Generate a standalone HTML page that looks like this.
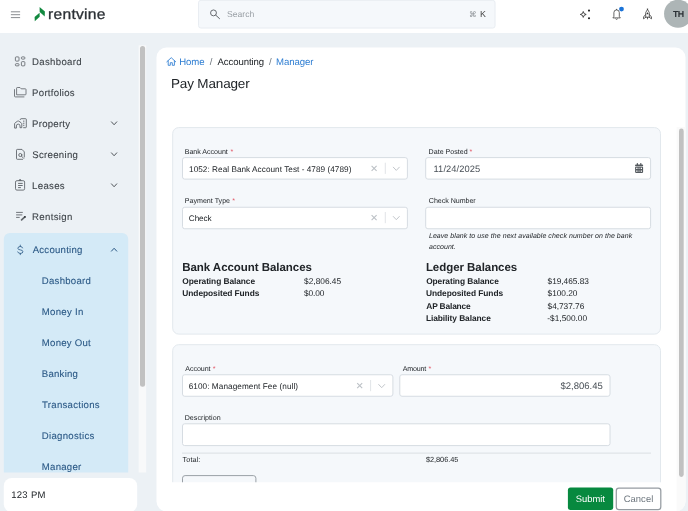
<!DOCTYPE html>
<html lang="en"><head><meta charset="utf-8"><title>Pay Manager - Rentvine</title>
<style>
html,body{margin:0;padding:0}
body{width:688px;height:511px;overflow:hidden;background:#ecf1f5;position:relative;
font-family:"Liberation Sans",Arial,sans-serif;-webkit-font-smoothing:antialiased}
.a{position:absolute;box-sizing:border-box}
.t{position:absolute;white-space:nowrap;line-height:1;margin:0;padding:0;text-rendering:geometricPrecision}
svg{position:absolute;left:0;top:0;overflow:visible}
</style></head><body>

<svg width="688" height="511" viewBox="0 0 688 511">
<defs><clipPath id="scrollclip"><rect x="156" y="47" width="520.6" height="435.3"/></clipPath></defs>
<rect x="0.00" y="-2.00" width="688.00" height="35.00" rx="0" fill="#fff"/>
<rect x="198.50" y="0.30" width="296.60" height="27.80" rx="2.5" fill="#f5f8fb" stroke="#e6ebf0" stroke-width="0.9"/>
<circle cx="678.1" cy="13.8" r="14.05" fill="#adb5b6"/>
<rect x="156.50" y="47.60" width="529.00" height="463.80" rx="10" fill="#fff"/>
<path d="M676.6 127 H685.5 V501.4 A10 10 0 0 1 676.6 511.35 Z" fill="#fafafa"/>
<rect x="679.00" y="128.60" width="4.70" height="348.30" rx="2.35" fill="#c1c1c1"/>
<path d="M3.8 472.5 V239 A6 6 0 0 1 9.8 233 H122.2 A6 6 0 0 1 128.2 239 V472.5 Z" fill="#d4eaf7"/>
<rect x="138.60" y="45.40" width="7.60" height="427.10" rx="0" fill="#f8f9fa"/>
<rect x="140.00" y="46.00" width="5.10" height="340.80" rx="2.5" fill="#c1c1c1"/>
<rect x="3.80" y="478.00" width="133.40" height="34.20" rx="8" fill="#fff"/>
<rect x="172.70" y="127.60" width="487.80" height="206.50" rx="6" fill="#f5f8fb" stroke="#e2e8ed" stroke-width="1.0"/>
<g clip-path="url(#scrollclip)">
<rect x="172.70" y="344.70" width="487.80" height="175.30" rx="6" fill="#f5f8fb" stroke="#e2e8ed" stroke-width="1.0"/>
<rect x="182.50" y="374.75" width="210.40" height="21.50" rx="2.2" fill="#fff" stroke="#d6dce2" stroke-width="1.0"/>
<rect x="399.80" y="374.75" width="210.20" height="21.50" rx="2.2" fill="#fff" stroke="#d6dce2" stroke-width="1.0"/>
<rect x="182.50" y="423.80" width="427.50" height="21.80" rx="2.2" fill="#fff" stroke="#d6dce2" stroke-width="1.0"/>
<path d="M182 453.1 H651" stroke="#dadfe3" stroke-width="1"/>
<rect x="182.50" y="475.60" width="73.40" height="22.40" rx="2.6" fill="none" stroke="#9aa0a6" stroke-width="1.0"/>
</g>
<rect x="182.50" y="157.60" width="224.90" height="21.50" rx="2.2" fill="#fff" stroke="#d6dce2" stroke-width="1.0"/>
<rect x="425.70" y="157.60" width="224.90" height="21.50" rx="2.2" fill="#fff" stroke="#d6dce2" stroke-width="1.0"/>
<rect x="182.50" y="207.25" width="224.90" height="21.50" rx="2.2" fill="#fff" stroke="#d6dce2" stroke-width="1.0"/>
<rect x="425.70" y="207.25" width="224.90" height="21.50" rx="2.2" fill="#fff" stroke="#d6dce2" stroke-width="1.0"/>
<rect x="567.90" y="487.60" width="45.30" height="22.50" rx="2.6" fill="#07893f"/>
<rect x="616.30" y="488.10" width="44.50" height="21.50" rx="2.6" fill="#fff" stroke="#969ca2" stroke-width="1.25"/>
</svg>
<svg width="688" height="511" viewBox="0 0 688 511">
<path d="M10.9 11.8H20.1M10.9 14.7H20.1M10.9 17.6H20.1" stroke="#6a6f74" stroke-width="0.8" fill="none"/>
<path d="M39.6 6.9 L44.9 11.5 L44.7 16.4 L39.7 12.1 Z" fill="#12893f"/>
<path d="M39.6 12.7 L39.7 16.7 L34.8 21.2 L34.6 17.1 Z" fill="#12893f"/>
<circle cx="213.5" cy="12.9" r="2.95" fill="none" stroke="#5f6368" stroke-width="0.95"/><path d="M215.7 15.1 L219.5 18.6" stroke="#5f6368" stroke-width="1.0" stroke-linecap="round"/>
<path d="M583.25 11.5 Q583.5 14.2 586.2 14.45 Q583.5 14.7 583.25 17.4 Q583 14.7 580.3 14.45 Q583 14.2 583.25 11.5Z" fill="none" stroke="#222" stroke-width="0.8" stroke-linejoin="round"/>
<circle cx="589" cy="10.6" r="1.05" fill="#222"/><circle cx="589" cy="18.2" r="1.05" fill="#222"/>
<path d="M612.9 17.9 H620.3 L619.3 16.4 V12.6 A2.7 2.7 0 0 0 613.9 12.6 V16.4 Z" fill="none" stroke="#333" stroke-width="0.75" stroke-linejoin="round"/><path d="M615.5 18.7 Q616.6 20.2 617.7 18.7" fill="none" stroke="#333" stroke-width="0.75"/><path d="M616.6 8.9 V10" stroke="#333" stroke-width="0.75"/>
<circle cx="621.5" cy="9.1" r="2.4" fill="#1a73d8"/>
<g fill="none" stroke="#333" stroke-width="0.75" stroke-linejoin="round" stroke-linecap="round"><path d="M647.5 9.1 Q650.3 12.2 649.3 17.2 H645.7 Q644.7 12.2 647.5 9.1Z"/><path d="M645.5 14.6 L643.5 17 V18.8 L645.8 17.3"/><path d="M649.5 14.6 L651.5 17 V18.8 L649.2 17.3"/><path d="M647.5 17.4 V18.9"/></g><circle cx="647.5" cy="13.4" r="0.85" fill="#333"/>
<g fill="none" stroke="#5a5f64" stroke-width="0.8"><rect x="15.4" y="56.9" width="3.6" height="4.2" rx="0.8"/><rect x="21.4" y="56.9" width="3.45" height="2.2" rx="0.8"/><rect x="15.4" y="63.7" width="3.6" height="2.15" rx="0.8"/><rect x="21.4" y="61.65" width="3.45" height="4.2" rx="0.8"/></g>
<g fill="none" stroke="#5a5f64" stroke-width="0.8" stroke-linejoin="round"><path d="M16.6 94.8 V88.2 Q16.6 87.5 17.3 87.5 H20 L21.2 88.8 H25.3 Q26 88.8 26 89.5 V94.1 Q26 94.8 25.3 94.8 Z"/><path d="M14.5 89.2 V96.1 Q14.5 96.9 15.3 96.9 H24.4"/></g>
<g fill="none" stroke="#5a5f64" stroke-width="0.85" stroke-linejoin="round" stroke-linecap="round"><path d="M20.2 119.5 Q20.3 118.7 21.1 118.7 H25.6 Q26.3 118.7 26.3 119.4 V127 Q26.3 127.7 25.6 127.7 H23.6"/><path d="M14.6 127.7 V123.9 Q14.6 123.2 15.2 122.8 L17.5 121.2 Q18.2 120.7 18.9 121.2 L21.2 122.8 Q21.8 123.2 21.8 123.9 V127.7 H20 V125.9 A1.8 1.8 0 0 0 16.4 125.9 V127.7 Z"/><path d="M23.8 120.9 V121.5 M23.8 123 V123.6 M23.8 125.1 V125.7" stroke-width="0.9"/></g>
<g fill="none" stroke="#5a5f64" stroke-width="0.85" stroke-linejoin="round" stroke-linecap="round"><path d="M22.6 159.3 H17.3 Q16.5 159.3 16.5 158.5 V150.2 Q16.5 149.4 17.3 149.4 H22 L24.3 151.9 V157"/><circle cx="20.3" cy="155" r="1.55"/><path d="M21.5 156.2 L23.7 158.4"/></g>
<g fill="none" stroke="#5a5f64" stroke-width="0.85" stroke-linejoin="round"><rect x="15.5" y="180.7" width="9.1" height="9.4" rx="1.4"/><path d="M18.8 180.7 L20.05 179.3 L21.3 180.7" fill="#5a5f64"/><path d="M18.1 183.4 H22.7 M18.1 185.5 H22.7 M18.1 187.6 H20.9" stroke-width="0.9"/></g>
<g fill="none" stroke="#5a5f64" stroke-width="0.85"><path d="M16.1 212.4 H22.8 M16.1 214.9 H22.3 M16.1 217.4 H19.7"/></g><path d="M21.6 219.9 L24.9 216.9" stroke="#62676c" stroke-width="1.7" stroke-linecap="round"/><circle cx="24.9" cy="216.9" r="0.85" fill="#2f3337"/>
<g fill="none" stroke="#2a5885" stroke-width="0.8" stroke-linecap="round"><path d="M22.6 247.9 Q22.3 246.5 20.3 246.5 Q17.9 246.5 17.9 248.3 Q17.9 249.7 20.3 249.9 Q22.9 250.1 22.9 251.8 Q22.9 253.4 20.3 253.4 Q18.1 253.4 17.7 251.9"/><path d="M20.3 245.1 V246.5 M20.3 253.4 V254.7"/></g>
<path d="M111.44999999999999 121.85 L114.1 124.75 L116.75 121.85" fill="none" stroke="#50555a" stroke-width="1.0" stroke-linecap="round" stroke-linejoin="round"/>
<path d="M111.44999999999999 152.85000000000002 L114.1 155.75 L116.75 152.85000000000002" fill="none" stroke="#50555a" stroke-width="1.0" stroke-linecap="round" stroke-linejoin="round"/>
<path d="M111.44999999999999 183.85000000000002 L114.1 186.75 L116.75 183.85000000000002" fill="none" stroke="#50555a" stroke-width="1.0" stroke-linecap="round" stroke-linejoin="round"/>
<path d="M111.44999999999999 251.14999999999998 L114.1 248.25 L116.75 251.14999999999998" fill="none" stroke="#2a5885" stroke-width="1.0" stroke-linecap="round" stroke-linejoin="round"/>
<g fill="none" stroke="#2d7dd2" stroke-width="0.85" stroke-linejoin="round" stroke-linecap="round"><path d="M166.8 61.8 L171.25 57.7 L175.7 61.8"/><path d="M168.2 60.9 V65.3 H170.3 V62.7 H172.3 V65.3 H174.4 V60.9"/></g>
<path d="M371.6 165.8 L376.6 170.8 M376.6 165.8 L371.6 170.8" fill="none" stroke="#bcc1c6" stroke-width="1.1" stroke-linecap="butt"/>
<path d="M385.3 162.70000000000002 V173.9" stroke="#d9dde1" stroke-width="0.8"/>
<path d="M393.3 167.20000000000002 L396.3 170.4 L399.3 167.20000000000002" fill="none" stroke="#c2c6cb" stroke-width="1.0" stroke-linecap="round" stroke-linejoin="round"/>
<path d="M371.6 215.1 L376.6 220.1 M376.6 215.1 L371.6 220.1" fill="none" stroke="#bcc1c6" stroke-width="1.1" stroke-linecap="butt"/>
<path d="M385.3 212.0 V223.2" stroke="#d9dde1" stroke-width="0.8"/>
<path d="M393.3 216.5 L396.3 219.7 L399.3 216.5" fill="none" stroke="#c2c6cb" stroke-width="1.0" stroke-linecap="round" stroke-linejoin="round"/>
<path d="M357.2 383.1 L362.2 388.1 M362.2 383.1 L357.2 388.1" fill="none" stroke="#bcc1c6" stroke-width="1.1" stroke-linecap="butt"/>
<path d="M370.6 380.0 V391.20000000000005" stroke="#d9dde1" stroke-width="0.8"/>
<path d="M378.7 384.5 L381.7 387.70000000000005 L384.7 384.5" fill="none" stroke="#c2c6cb" stroke-width="1.0" stroke-linecap="round" stroke-linejoin="round"/>
<g fill="#555a5f"><rect x="635.1" y="166.6" width="8" height="6.3" rx="0.8"/><path d="M635.1 165.9 V165.3 Q635.1 164.5 635.9 164.5 H642.3 Q643.1 164.5 643.1 165.3 V165.9 Z"/><rect x="636.8" y="163" width="1.2" height="2.2" rx="0.5"/><rect x="640.2" y="163" width="1.2" height="2.2" rx="0.5"/><g fill="#fff"><rect x="636.2" y="167.7" width="1.3" height="1.3"/><rect x="640.7" y="167.7" width="1.3" height="1.3"/><rect x="636.2" y="170.5" width="1.3" height="1.3"/><rect x="640.7" y="170.5" width="1.3" height="1.3"/></g><g fill="#9ea2a6"><rect x="638.2" y="167.7" width="1.8" height="1.3"/><rect x="638.2" y="170.5" width="1.8" height="1.3"/></g></g>
</svg>
<div class="a" style="left:0;top:0;width:688px;height:511px;will-change:transform">
<div class="t" id="t0" style="left:48.17px;top:8.00px;font-size:14.6px;letter-spacing:0.258px;color:#2b3035;-webkit-text-stroke:0.3px #2b3035;transform:scaleX(1.07);transform-origin:0 0">rentvine</div>
<div class="t" id="t1" style="left:227.10px;top:10.00px;font-size:8.6px;letter-spacing:-0.013px;color:#9aa0a6">Search</div>
<div class="t" id="t2" style="left:469.10px;top:11.00px;font-size:7.6px;letter-spacing:0.000px;color:#8a8f94;font-family:'DejaVu Sans',sans-serif">⌘</div>
<div class="t" id="t3" style="left:479.90px;top:10.00px;font-size:8.9px;letter-spacing:0.000px;color:#444">K</div>
<div class="t" id="t4" style="left:672.95px;top:10.00px;font-size:8.9px;letter-spacing:-0.486px;color:#2b3035;font-weight:700">TH</div>
<div class="t" id="t5" style="left:32.10px;top:58.00px;font-size:9.6px;letter-spacing:0.322px;color:#3d4348;-webkit-text-stroke:0.1px #3d4348">Dashboard</div>
<div class="t" id="t6" style="left:32.10px;top:89.00px;font-size:9.6px;letter-spacing:0.281px;color:#3d4348;-webkit-text-stroke:0.1px #3d4348">Portfolios</div>
<div class="t" id="t7" style="left:32.10px;top:120.00px;font-size:9.6px;letter-spacing:0.238px;color:#3d4348;-webkit-text-stroke:0.1px #3d4348">Property</div>
<div class="t" id="t8" style="left:32.25px;top:151.00px;font-size:9.6px;letter-spacing:0.308px;color:#3d4348;-webkit-text-stroke:0.1px #3d4348">Screening</div>
<div class="t" id="t9" style="left:32.10px;top:182.00px;font-size:9.6px;letter-spacing:0.319px;color:#3d4348;-webkit-text-stroke:0.1px #3d4348">Leases</div>
<div class="t" id="t10" style="left:32.10px;top:213.00px;font-size:9.6px;letter-spacing:0.336px;color:#3d4348;-webkit-text-stroke:0.1px #3d4348">Rentsign</div>
<div class="t" id="t11" style="left:32.65px;top:246.00px;font-size:9.6px;letter-spacing:0.255px;color:#2a5885;-webkit-text-stroke:0.1px #2a5885">Accounting</div>
<div class="t" id="t12" style="left:41.80px;top:277.00px;font-size:9.6px;letter-spacing:0.259px;color:#2a5885;-webkit-text-stroke:0.1px #2a5885">Dashboard</div>
<div class="t" id="t13" style="left:41.80px;top:308.00px;font-size:9.6px;letter-spacing:0.293px;color:#2a5885;-webkit-text-stroke:0.1px #2a5885">Money In</div>
<div class="t" id="t14" style="left:41.80px;top:339.00px;font-size:9.6px;letter-spacing:0.258px;color:#2a5885;-webkit-text-stroke:0.1px #2a5885">Money Out</div>
<div class="t" id="t15" style="left:41.80px;top:370.00px;font-size:9.6px;letter-spacing:0.241px;color:#2a5885;-webkit-text-stroke:0.1px #2a5885">Banking</div>
<div class="t" id="t16" style="left:42.05px;top:401.00px;font-size:9.6px;letter-spacing:0.273px;color:#2a5885;-webkit-text-stroke:0.1px #2a5885">Transactions</div>
<div class="t" id="t17" style="left:41.80px;top:432.00px;font-size:9.6px;letter-spacing:0.293px;color:#2a5885;-webkit-text-stroke:0.1px #2a5885">Diagnostics</div>
<div class="t" id="t18" style="left:41.80px;top:463.00px;font-size:9.6px;letter-spacing:0.268px;color:#2a5885;-webkit-text-stroke:0.1px #2a5885">Manager</div>
<div class="t" id="t19" style="left:11.15px;top:491.00px;font-size:9.5px;letter-spacing:0.325px;color:#212529">123 PM</div>
<div class="t" id="t20" style="left:179.30px;top:58.00px;font-size:9.6px;letter-spacing:-0.123px;color:#2d7dd2">Home</div>
<div class="t" id="t21" style="left:209.70px;top:58.00px;font-size:9.6px;letter-spacing:0.000px;color:#6c757d">/</div>
<div class="t" id="t22" style="left:217.45px;top:58.00px;font-size:9.6px;letter-spacing:-0.090px;color:#212529">Accounting</div>
<div class="t" id="t23" style="left:268.90px;top:58.00px;font-size:9.6px;letter-spacing:0.000px;color:#6c757d">/</div>
<div class="t" id="t24" style="left:276.00px;top:58.00px;font-size:9.6px;letter-spacing:-0.082px;color:#2d7dd2">Manager</div>
<div class="t" id="t25" style="left:170.70px;top:77.00px;font-size:13.1px;letter-spacing:-0.149px;color:#212529;transform:scaleX(1.03);transform-origin:0 0">Pay Manager</div>
<div class="t" id="t26" style="left:184.70px;top:149.00px;font-size:7.1px;letter-spacing:-0.022px;color:#212529">Bank Account</div>
<div class="t" id="t27" style="left:230.50px;top:149.00px;font-size:7.1px;letter-spacing:0.000px;color:#e04a5a">*</div>
<div class="t" id="t28" style="left:428.60px;top:149.00px;font-size:7.1px;letter-spacing:0.012px;color:#212529">Date Posted</div>
<div class="t" id="t29" style="left:469.50px;top:149.00px;font-size:7.1px;letter-spacing:0.000px;color:#e04a5a">*</div>
<div class="t" id="t30" style="left:184.70px;top:198.00px;font-size:7.1px;letter-spacing:0.015px;color:#212529">Payment Type</div>
<div class="t" id="t31" style="left:232.30px;top:198.00px;font-size:7.1px;letter-spacing:0.000px;color:#e04a5a">*</div>
<div class="t" id="t32" style="left:428.80px;top:198.00px;font-size:7.1px;letter-spacing:-0.035px;color:#212529">Check Number</div>
<div class="t" id="t33" style="left:189.05px;top:166.00px;font-size:8.2px;letter-spacing:0.044px;color:#212529">1052: Real Bank Account Test - 4789 (4789)</div>
<div class="t" id="t34" style="left:433.55px;top:165.00px;font-size:9.3px;letter-spacing:0.091px;color:#495057">11/24/2025</div>
<div class="t" id="t35" style="left:188.85px;top:215.00px;font-size:8.2px;letter-spacing:-0.098px;color:#212529">Check</div>
<div class="t" id="t36" style="left:428.95px;top:233.00px;font-size:7.0px;letter-spacing:0.060px;color:#212529;font-style:italic">Leave blank to use the next available check number on the bank</div>
<div class="t" id="t37" style="left:429.00px;top:244.00px;font-size:7.0px;letter-spacing:0.048px;color:#212529;font-style:italic">account.</div>
<div class="t" id="t38" style="left:182.20px;top:263.00px;font-size:11.5px;letter-spacing:-0.041px;color:#212529;font-weight:700">Bank Account Balances</div>
<div class="t" id="t39" style="left:182.35px;top:277.00px;font-size:8.4px;letter-spacing:-0.078px;color:#212529;font-weight:700">Operating Balance</div>
<div class="t" id="t40" style="left:182.35px;top:289.00px;font-size:8.4px;letter-spacing:-0.073px;color:#212529;font-weight:700">Undeposited Funds</div>
<div class="t" id="t41" style="left:304.10px;top:277.00px;font-size:8.3px;letter-spacing:0.005px;color:#212529">$2,806.45</div>
<div class="t" id="t42" style="left:304.10px;top:289.00px;font-size:8.3px;letter-spacing:-0.151px;color:#212529">$0.00</div>
<div class="t" id="t43" style="left:425.90px;top:263.00px;font-size:11.5px;letter-spacing:-0.053px;color:#212529;font-weight:700">Ledger Balances</div>
<div class="t" id="t44" style="left:426.15px;top:277.00px;font-size:8.4px;letter-spacing:-0.084px;color:#212529;font-weight:700">Operating Balance</div>
<div class="t" id="t45" style="left:547.60px;top:277.00px;font-size:8.3px;letter-spacing:-0.030px;color:#212529">$19,465.83</div>
<div class="t" id="t46" style="left:425.95px;top:289.00px;font-size:8.4px;letter-spacing:-0.061px;color:#212529;font-weight:700">Undeposited Funds</div>
<div class="t" id="t47" style="left:547.60px;top:289.00px;font-size:8.3px;letter-spacing:-0.039px;color:#212529">$100.20</div>
<div class="t" id="t48" style="left:426.25px;top:302.00px;font-size:8.4px;letter-spacing:-0.161px;color:#212529;font-weight:700">AP Balance</div>
<div class="t" id="t49" style="left:547.60px;top:302.00px;font-size:8.3px;letter-spacing:-0.032px;color:#212529">$4,737.76</div>
<div class="t" id="t50" style="left:425.90px;top:314.00px;font-size:8.4px;letter-spacing:-0.073px;color:#212529;font-weight:700">Liability Balance</div>
<div class="t" id="t51" style="left:547.30px;top:314.00px;font-size:8.3px;letter-spacing:0.009px;color:#212529">-$1,500.00</div>
<div class="t" id="t52" style="left:185.25px;top:366.00px;font-size:7.1px;letter-spacing:-0.055px;color:#212529">Account</div>
<div class="t" id="t53" style="left:212.70px;top:366.00px;font-size:7.1px;letter-spacing:0.000px;color:#e04a5a">*</div>
<div class="t" id="t54" style="left:402.85px;top:366.00px;font-size:7.1px;letter-spacing:-0.209px;color:#212529">Amount</div>
<div class="t" id="t55" style="left:428.50px;top:366.00px;font-size:7.1px;letter-spacing:0.000px;color:#e04a5a">*</div>
<div class="t" id="t56" style="left:188.65px;top:383.00px;font-size:8.2px;letter-spacing:0.077px;color:#212529">6100: Management Fee (null)</div>
<div class="t" id="t57" style="left:560.55px;top:382.00px;font-size:9.5px;letter-spacing:0.003px;color:#495057">$2,806.45</div>
<div class="t" id="t58" style="left:184.70px;top:415.00px;font-size:7.1px;letter-spacing:0.048px;color:#212529">Description</div>
<div class="t" id="t59" style="left:182.60px;top:456.00px;font-size:7.2px;letter-spacing:0.118px;color:#212529">Total:</div>
<div class="t" id="t60" style="left:425.90px;top:456.00px;font-size:7.4px;letter-spacing:-0.038px;color:#212529">$2,806.45</div>
<div class="t" id="t61" style="left:575.85px;top:494.00px;font-size:9.4px;letter-spacing:-0.019px;color:#fff">Submit</div>
<div class="t" id="t62" style="left:623.70px;top:494.00px;font-size:9.4px;letter-spacing:0.076px;color:#6c757d">Cancel</div>
</div>
</body></html>
